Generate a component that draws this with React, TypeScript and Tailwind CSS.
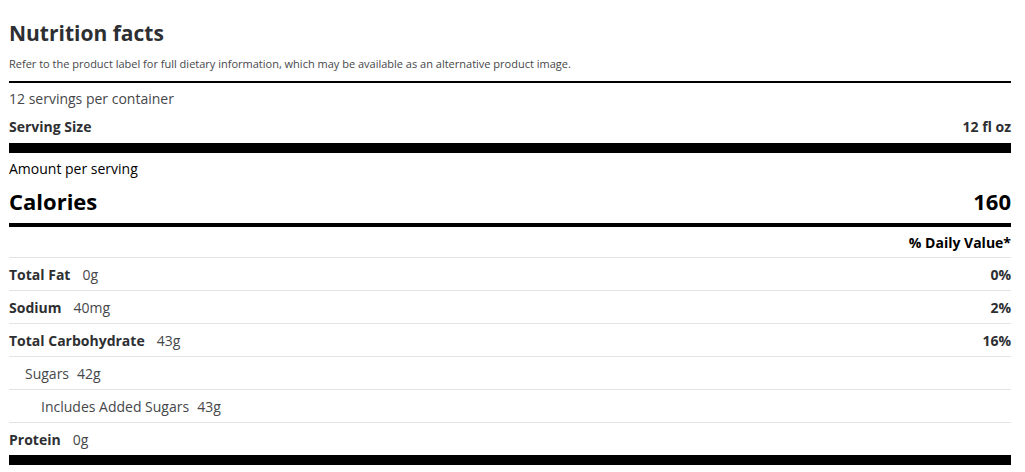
// Nutrition facts panel

const rows = [
  { label: 'Total Fat', value: '0g', dv: '0%', indent: 0 },
  { label: 'Sodium', value: '40mg', dv: '2%', indent: 0 },
  { label: 'Total Carbohydrate', value: '43g', dv: '16%', indent: 0 },
  { label: 'Sugars', value: '42g', dv: '', indent: 1 },
  { label: 'Includes Added Sugars', value: '43g', dv: '', indent: 2 },
  { label: 'Protein', value: '0g', dv: '', indent: 0 },
]

function NutrientRow({ label, value, dv, indent }: { label: string; value: string; dv: string; indent: number }) {
  const bold = indent === 0
  return (
    <div className="flex h-[33px] items-center justify-between border-t border-[#e3e4e5] text-[14px]">
      <div className={indent === 1 ? 'pl-[16px]' : indent === 2 ? 'pl-[32px]' : ''}>
        {bold ? (
          <>
            <span className="font-bold text-[#2e2f32]">{label}</span>
            <span className="ml-[12px] text-[#46474a]">{value}</span>
          </>
        ) : (
          <span className="text-[#46474a]">
            {label}
            <span className="ml-[8px]">{value}</span>
          </span>
        )}
      </div>
      {dv && <span className="font-bold text-[#2e2f32]">{dv}</span>}
    </div>
  )
}

export default function App() {
  return (
    <div
      className="min-h-[472px] bg-white pl-[9px] pr-[14px] text-[#2e2f32]"
      style={{ fontFamily: '"Open Sans", "Noto Sans", sans-serif' }}
    >
      {/* Header */}
      <div className="pt-[18px]">
        <h2 className="text-[21px] font-bold leading-[30px] text-[#2e2f32]">Nutrition facts</h2>
        <p className="mt-[9px] text-[11px] leading-[14px] text-[#46474a]">
          Refer to the product label for full dietary information, which may be available as an alternative product image.
        </p>
      </div>

      <div className="mt-[10px] border-t-2 border-black">
        <div className="flex h-[26px] items-end text-[14px] text-[#46474a]">12 servings per container</div>
        <div className="flex h-[34px] items-center justify-between text-[14px] font-bold text-[#2e2f32]">
          <span>Serving Size</span>
          <span>12 fl oz</span>
        </div>
      </div>

      <div className="border-t-[10px] border-black">
        <div className="flex h-[26px] items-end text-[14px] text-black">Amount per serving</div>
        <div className="flex h-[44px] items-center justify-between text-[22px] font-bold text-black">
          <span>Calories</span>
          <span>160</span>
        </div>
      </div>

      <div className="border-t-4 border-black">
        <div className="flex h-[30px] items-center justify-end text-[14px] font-bold text-black">% Daily Value*</div>
        {rows.map(r => (
          <NutrientRow key={r.label} {...r} />
        ))}
        <div className="h-[10px] bg-black" />
      </div>
    </div>
  )
}
